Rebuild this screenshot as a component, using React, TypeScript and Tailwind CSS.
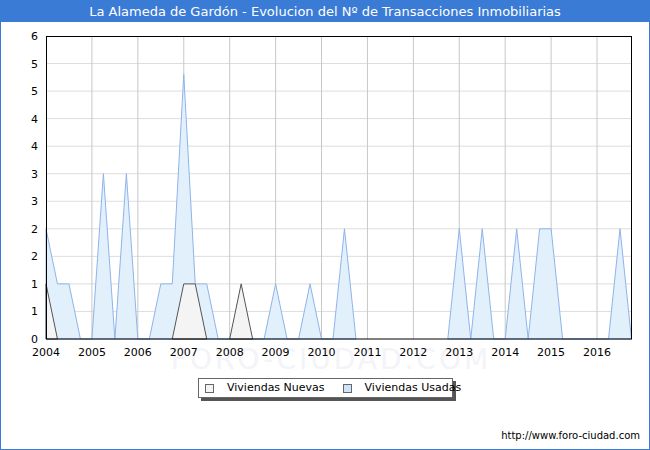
import React from "react";

const X0 = 45, Y0 = 338, PY = 55.1, Q = 11.48;
const px = (i: number) => X0 + i * Q;
const py = (v: number) => Y0 - v * PY;

const usA: [number, number][] = [
  [0,2],[1,1],[2,1],[3,0],[4,0],[5,3],[6,0],[7,3],[8,0],[9,0],[10,1],[11,1],[12,4.8],[13,1],[14,1],[15,0],
  [16,0],[17,0],[18,0],[19,0],[20,1],[21,0],[22,0],[23,1],[24,0],[25,0],[26,2],[27,0],
];
const usB: [number, number][] = [
  [35,0],[36,2],[37,0],[38,2],[39,0],[40,0],[41,2],[42,0],[43,2],[44,2],[45,0],[49,0],[50,2],[51,0],
];
const nA: [number, number][] = [[0,1],[1,0]];
const nB: [number, number][] = [[11,0],[12,1],[13,1],[14,0]];
const nC: [number, number][] = [[16,0],[17,1],[18,0]];

function area(d: [number, number][]) {
  const pts = d.map(([i, v]) => `${px(i)},${py(v)}`).join(" ");
  return `${px(d[0][0])},${Y0} ${pts} ${px(d[d.length - 1][0])},${Y0}`;
}

const yLabels = ["0","1","1","2","2","3","3","4","4","5","5","6"];
const years = ["2004","2005","2006","2007","2008","2009","2010","2011","2012","2013","2014","2015","2016"];

export default function App() {
  return (
    <div className="w-[650px] h-[450px] bg-white border border-[#3a7bd5] relative" style={{ fontFamily: '"DejaVu Sans", sans-serif' }}>
      <div className="h-[21px] bg-[#3a7bd5] text-white text-[13px] flex items-center justify-center">
        La Alameda de Gardón - Evolucion del Nº de Transacciones Inmobiliarias
      </div>
      <svg width="650" height="372" className="absolute left-0 top-0" style={{ fontFamily: '"DejaVu Sans", sans-serif' }}>
        <text x={330} y={368} fontSize={28} textAnchor="middle" fill="#f3f3f8" letterSpacing={3}>FORO-CIUDAD.COM</text>
        {yLabels.map((l, i) => {
          const y = Y0 - i * 27.55;
          return (
            <g key={i}>
              {i > 0 && i < 11 && <line x1={45} x2={630} y1={y} y2={y} stroke="#dddddd" strokeWidth={1} />}
              <text x={37} y={y + 4} fontSize={11} textAnchor="end" fill="#000">{l}</text>
            </g>
          );
        })}
        {years.map((yr, i) => {
          const x = X0 + i * 45.92;
          return (
            <g key={yr}>
              {i > 0 && <line x1={x} x2={x} y1={35} y2={338} stroke="#c8c8c8" strokeWidth={1} />}
              <text x={x} y={355} fontSize={11} textAnchor="middle" fill="#000">{yr}</text>
            </g>
          );
        })}
        <polygon points={area(usA)} fill="#e2f0fc" stroke="#8fb3ea" strokeWidth={1} />
        <polygon points={area(usB)} fill="#e2f0fc" stroke="#8fb3ea" strokeWidth={1} />
        <polygon points={area(nA)} fill="#f4f4f4" stroke="#555" strokeWidth={1} />
        <polygon points={area(nB)} fill="#f4f4f4" stroke="#555" strokeWidth={1} />
        <polygon points={area(nC)} fill="#f4f4f4" stroke="#555" strokeWidth={1} />
        <rect x={45.5} y={35.5} width={585} height={302.5} fill="none" stroke="#000" strokeWidth={1} />
      </svg>
      <div className="absolute left-[197px] top-[377px] w-[255px] h-[20px] border border-[#666] bg-white shadow-[3px_3px_0_#555] flex items-center text-[11px] text-black whitespace-nowrap">
        <span className="ml-[6px] w-[9px] h-[9px] border border-[#666] bg-[#f4f4f4] shrink-0" />
        <span className="ml-[13px]">Viviendas Nuevas</span>
        <span className="ml-[18px] w-[9px] h-[9px] border border-[#666] bg-[#cfe4f8] shrink-0" />
        <span className="ml-[13px]">Viviendas Usadas</span>
      </div>
      <div className="absolute right-[9px] top-[427px] text-[10px] text-black whitespace-nowrap">http://www.foro-ciudad.com</div>
    </div>
  );
}
